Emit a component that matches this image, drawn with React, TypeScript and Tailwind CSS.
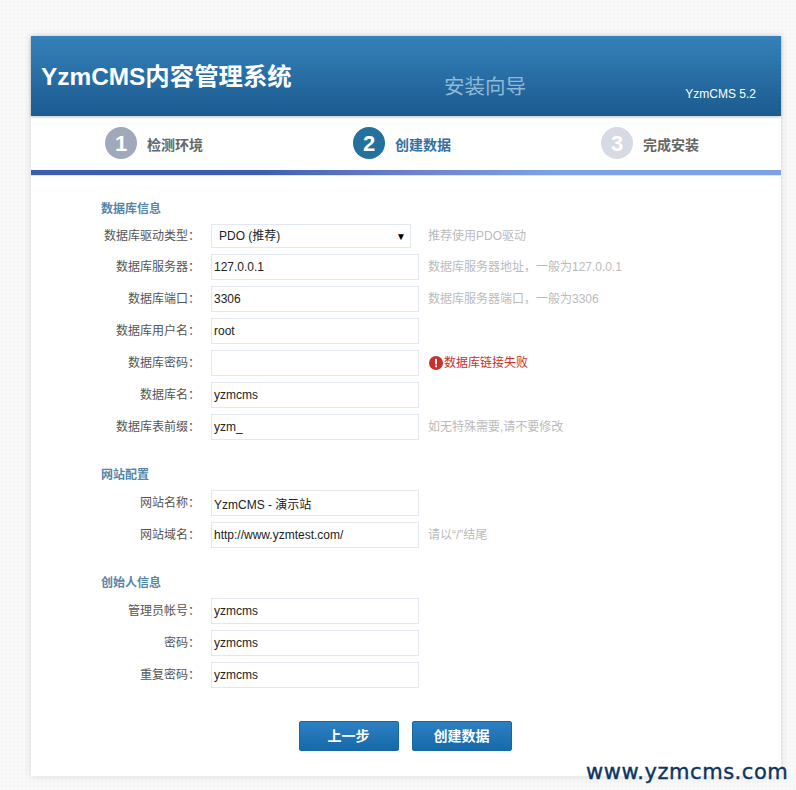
const cjk = "font-['Liberation_Sans','Noto_Sans_CJK_SC',sans-serif]";

interface RowProps {
  label: string;
  value: string;
  hint?: string;
  error?: string;
}

function Row({ label, value, hint, error }: RowProps) {
  return (
    <div className="flex h-[26px] items-center mb-[6px]">
      <label className="w-[180px] pr-[11px] text-right text-[12px] whitespace-nowrap text-[#555]">{label}：</label>
      <input
        readOnly
        value={value}
        className="h-[26px] w-[208px] border border-[#e3e7ef] bg-white px-[2px] text-[12px] text-[#222] outline-none"
      />
      {hint && <span className="ml-[9px] text-[12px] text-[#bbb]">{hint}</span>}
      {error && (
        <span className="ml-[10px] flex items-center text-[12px] text-[#c9302c]">
          <svg width="14" height="14" viewBox="0 0 15 15" className="mr-px">
            <circle cx="7.5" cy="7.5" r="7.5" fill="#c9302c" />
            <rect x="6.5" y="3" width="2" height="6" fill="#fff" />
            <rect x="6.5" y="10" width="2" height="2" fill="#fff" />
          </svg>
          {error}
        </span>
      )}
    </div>
  );
}

function Step({ n, title, tone, text, className }: { n: number; title: string; tone: string; text: string; className: string }) {
  return (
    <div className={`flex items-center ${className}`}>
      <div className={`flex h-8 w-8 items-center justify-center rounded-full text-[22px] font-bold text-white ${tone}`}>{n}</div>
      <span className={`ml-[10px] mt-[4px] text-[14px] font-bold ${text}`}>{title}</span>
    </div>
  );
}

function SectionTitle({ children }: { children: React.ReactNode }) {
  return <h3 className="mb-[7px] h-[16px] pl-[70px] text-[12px] leading-[16px] font-bold text-[#5585a8]">{children}</h3>;
}

export default function App() {
  return (
    <div className={`relative h-[790px] overflow-hidden bg-[#f9f9f9] bg-[radial-gradient(#f4f4f4_1px,transparent_1px)] bg-[length:4px_4px] pt-[36px] ${cjk}`}>
      <div className="mx-[31px] h-[740px] w-[750px] bg-white shadow-[0_0_8px_rgba(0,0,0,0.12)]">
        {/* Header */}
        <header className="relative z-10 flex h-20 bg-gradient-to-b from-[#3581bb] to-[#1b5b8f] shadow-[0_1px_3px_rgba(0,0,0,0.25)]">
          <h1 className="ml-[10px] mt-[24px] w-[400px] text-[24.4px] leading-[34px] font-bold whitespace-nowrap text-white">YzmCMS内容管理系统</h1>
          <span className="ml-[3px] mt-[38px] h-[26px] text-[20.5px] leading-[26px] text-[#8fb9d8]">安装向导</span>
          <span className="ml-auto mr-[25px] mt-[50px] h-[16px] text-[12px] leading-[16px] text-white">YzmCMS 5.2</span>
        </header>

        {/* Steps */}
        <div className="flex h-[54px] items-center">
          <Step n={1} title="检测环境" tone="bg-[#9fa9bb]" text="text-[#666]" className="ml-[74px] w-[248px]" />
          <Step n={2} title="创建数据" tone="bg-[#24709f]" text="text-[#34709f]" className="w-[248px]" />
          <Step n={3} title="完成安装" tone="bg-[#d5dae5]" text="text-[#666]" className="" />
        </div>
        <div className="h-[5px] bg-gradient-to-r from-[#3a5fad] from-30% via-[#6b80cc] via-50% to-[#7ba3e4] to-70%" />
        <div className="h-px bg-[#dfe3ee]" />

        {/* Form */}
        <div className="pt-[25px]">
          <SectionTitle>数据库信息</SectionTitle>
          <div className="flex h-[24px] items-center mb-[6px]">
            <label className="w-[180px] pr-[11px] text-right text-[12px] whitespace-nowrap text-[#555]">数据库驱动类型：</label>
            <div className="flex h-[24px] w-[200px] items-center justify-between border border-[#e3e7ef] bg-white pl-[7px] pr-[4px] text-[12px] text-[#222]">
              PDO (推荐)
              <span className="text-[10px] text-black">▼</span>
            </div>
            <span className="ml-[17px] text-[12px] text-[#bbb]">推荐使用PDO驱动</span>
          </div>
          <Row label="数据库服务器" value="127.0.0.1" hint="数据库服务器地址，一般为127.0.0.1" />
          <Row label="数据库端口" value="3306" hint="数据库服务器端口，一般为3306" />
          <Row label="数据库用户名" value="root" />
          <Row label="数据库密码" value="" error="数据库链接失败" />
          <Row label="数据库名" value="yzmcms" />
          <Row label="数据库表前缀" value="yzm_" hint="如无特殊需要,请不要修改" />

          <div className="h-[21px]" />
          <SectionTitle>网站配置</SectionTitle>
          <Row label="网站名称" value="YzmCMS - 演示站" />
          <Row label="网站域名" value="http://www.yzmtest.com/" hint="请以“/”结尾" />

          <div className="h-[21px]" />
          <SectionTitle>创始人信息</SectionTitle>
          <Row label="管理员帐号" value="yzmcms" />
          <Row label="密码" value="yzmcms" />
          <Row label="重复密码" value="yzmcms" />

          <div className="mt-[33px] flex justify-center gap-[13px] pr-[2px]">
            <button className="h-[30px] w-[100px] rounded-[2px] border border-[#15689f] bg-gradient-to-b from-[#2c80c2] to-[#166aa8] text-[14px] font-bold text-white">上一步</button>
            <button className="h-[30px] w-[100px] rounded-[2px] border border-[#15689f] bg-gradient-to-b from-[#2c80c2] to-[#166aa8] text-[14px] font-bold text-white">创建数据</button>
          </div>
        </div>
      </div>

      {/* Watermark */}
      <span className="absolute left-[586px] top-[758px] font-['DejaVu_Sans',sans-serif] text-[21px] leading-[28px] tracking-[0.55px] whitespace-nowrap text-[#0d3563] [-webkit-text-stroke:0.4px_#0d3563]">www.yzmcms.com</span>
    </div>
  );
}
